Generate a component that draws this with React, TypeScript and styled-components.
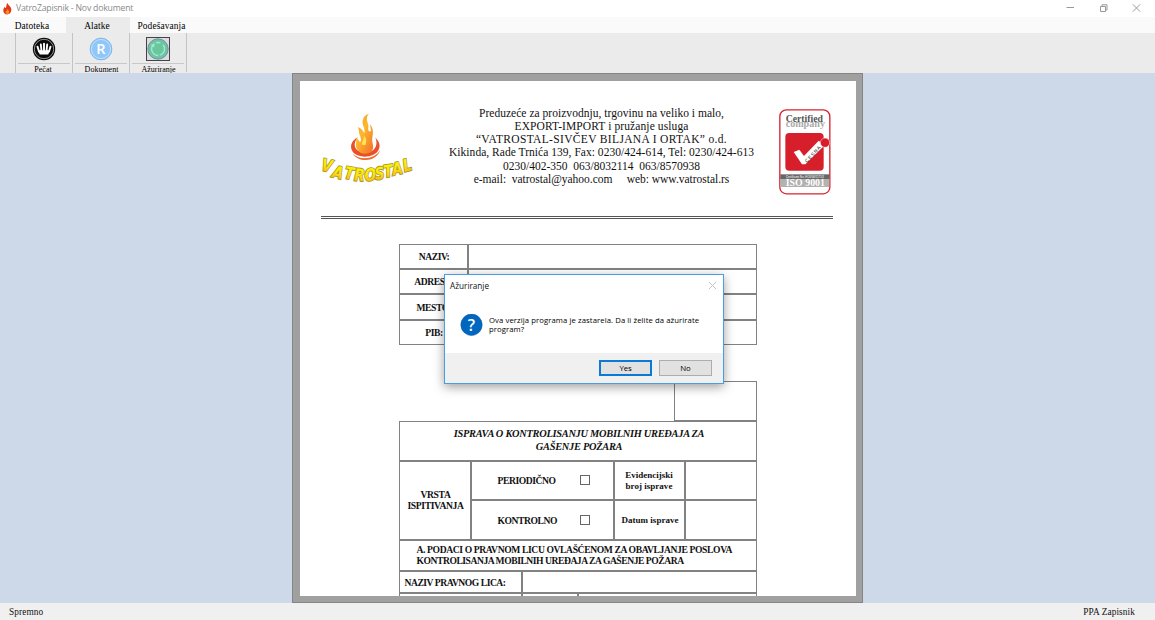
import React from 'react';
import styled, { createGlobalStyle, css } from 'styled-components';

const serif = '"Liberation Serif", "Times New Roman", serif';
const sans = '"Open Sans", "Noto Sans", sans-serif';

const GlobalStyle = createGlobalStyle`
  * { box-sizing: border-box; }
  body { margin: 0; background: #cdd8e8; overflow: hidden; }
`;

const Window = styled.div`
  position: relative;
  display: flex;
  flex-direction: column;
  width: 1155px;
  height: 620px;
  overflow: hidden;
  font-family: ${serif};
  color: #111;
`;

const TitleBar = styled.header`
  display: flex;
  align-items: center;
  height: 17px;
  padding: 0 14px 0 2px;
  background: #fff;
`;

const Title = styled.h1`
  flex: 1;
  margin: 0 0 0 3px;
  font: 400 8.7px/17px ${sans};
  letter-spacing: -0.2px;
  color: #8a8a8a;
`;

const Controls = styled.div`
  display: flex;
  align-items: center;
  gap: 24px;
  height: 15px;
`;

const Tabs = styled.nav`
  display: flex;
  height: 16px;
  background: #fafafa;
`;

const Tab = styled.button<{ $width: number; $active?: boolean }>`
  width: ${p => p.$width}px;
  padding: 2px 2px 0 0;
  border: 0;
  background: ${p => (p.$active ? '#ebebeb' : 'transparent')};
  font: 400 9.4px/14px ${serif};
  letter-spacing: 0.1px;
  color: #000;
`;

const Ribbon = styled.div`
  display: flex;
  height: 40px;
  padding-left: 15px;
  background: #ebebeb;
`;

const Group = styled.div<{ $width: number }>`
  display: flex;
  flex-direction: column;
  align-items: center;
  width: ${p => p.$width}px;
  padding: 4px 2px 0;
  border-left: 1px solid #c4c4c4;
`;

const GroupLabel = styled.span<{ $left?: number; $right?: number }>`
  align-self: stretch;
  height: 10px;
  padding-right: ${p => p.$right ?? 0}px;
  padding-left: ${p => p.$left ?? 0}px;
  border-top: 1px solid #c8c8c8;
  text-align: center;
  font-size: 8px;
  line-height: 12px;
  color: #000;
`;

const RibbonEnd = styled.div`
  width: 1px;
  height: 39px;
  background: #c4c4c4;
`;

const Workspace = styled.main`
  display: flex;
  justify-content: center;
  height: 530px;
  padding-right: 1px;
  background: #cdd8e8;
`;

const Paper = styled.article`
  width: 571px;
  height: 530px;
  border: 8px solid #a0a0a0;
  border-right-width: 7px;
  border-bottom-width: 7px;
  outline: 1px solid #858585;
  outline-offset: -1px;
  background: #fff;
  overflow: hidden;
`;

const Letterhead = styled.div`
  display: grid;
  grid-template-columns: 120px 1fr 52px;
  width: 521px;
  height: 135px;
  margin-left: 10px;
  padding-top: 14px;
`;

const Company = styled.div`
  padding-top: 11.5px;
  margin: 0 5px 0 0;
  text-align: center;
  font-size: 11.5px;
  line-height: 13.3px;
`;

const Line = styled.div<{ $spacing?: number }>`
  white-space: pre;
  letter-spacing: ${p => p.$spacing ?? 0}px;
`;

const Rule = styled.hr`
  width: 512px;
  height: 3px;
  margin: 0 0 0 21px;
  border: solid #555;
  border-width: 1px 0;
`;

const Form = styled.div`
  width: 358px;
  margin: 25px 0 0 99px;
`;

const Table = styled.div<{ $columns: string; $rows: string }>`
  display: grid;
  grid-template-columns: ${p => p.$columns};
  grid-template-rows: ${p => p.$rows};
`;

const Cell = styled.div<{ $rowSpan?: number; $align?: string; $pad?: string; $size?: number; $spacing?: number }>`
  display: flex;
  align-items: center;
  justify-content: ${p => p.$align ?? 'center'};
  padding: ${p => p.$pad ?? '0 0 0 2px'};
  border: 1px solid #828282;
  font-size: ${p => p.$size ?? 9.6}px;
  letter-spacing: ${p => p.$spacing ?? -0.42}px;
  line-height: 11px;
  font-weight: 700;
  white-space: pre;
  ${p => p.$rowSpan && css`grid-row: span ${p.$rowSpan};`}
`;

const Heading = styled(Cell)`
  font-style: italic;
  text-align: center;
  line-height: 12.5px;
`;

const Centered = styled.span`
  text-align: center;
`;

const Stretch = styled.span<{ $spacing: number }>`
  letter-spacing: ${p => p.$spacing}px;
`;

const StampBox = styled.div`
  width: 83px;
  height: 40px;
  margin: 36px 0 0 275px;
  border: 1px solid #828282;
`;

const Choice = styled.span`
  width: 82px;
`;

const CheckBox = styled.span`
  width: 10px;
  height: 10px;
  border: 1px solid #666;
`;

const StatusBar = styled.footer`
  display: flex;
  justify-content: space-between;
  height: 17px;
  padding: 1px 20px 0 9px;
  background: #f0f0f0;
  font-size: 9.3px;
  letter-spacing: 0.1px;
  line-height: 16px;
`;

const Dialog = styled.section`
  position: absolute;
  left: 444px;
  top: 274px;
  display: flex;
  flex-direction: column;
  width: 280px;
  height: 110px;
  border: 1px solid #4a9de0;
  background: #fff;
  box-shadow: 0 3px 10px rgba(0, 0, 0, 0.38);
  font-family: ${sans};
`;

const DialogTitle = styled.div`
  display: flex;
  justify-content: space-between;
  align-items: center;
  height: 21px;
  padding: 0 6px 0 5px;
  font-size: 8.2px;
  line-height: 20px;
`;

const DialogBody = styled.div`
  display: flex;
  flex: 1;
  padding: 18px 0 0 15px;
`;

const Message = styled.p`
  margin: 2px 0 0 6px;
  font-size: 7.7px;
  letter-spacing: 0.09px;
  line-height: 9.4px;
  color: #000;
`;

const DialogFooter = styled.div`
  display: flex;
  justify-content: flex-end;
  gap: 7px;
  height: 30px;
  padding: 7px 11px 0;
  background: #f0f0f0;
`;

const DialogButton = styled.button<{ $primary?: boolean }>`
  width: 53px;
  height: 16px;
  padding: 0;
  border: ${p => (p.$primary ? '2px solid #0b7ad6' : '1px solid #adadad')};
  background: #e1e1e1;
  font: 400 7.8px/12px ${sans};
  letter-spacing: -0.1px;
  color: #000;
`;

const Flame = () => (
  <svg width="11" height="13" viewBox="0 0 11 13">
    <path d="M5.2 0.8 C6 3.4 9.9 4.8 9.3 8.6 C8.9 11.3 7 12.4 5.4 12.4 C3.2 12.4 1.3 11 1.3 8.5 C1.3 6.8 2.2 5.8 2.8 4.8 C3 5.8 3.4 6 3.8 6 C4.6 4.9 4.3 2.6 5.2 0.8Z" fill="#e03a14" />
    <path d="M5.5 7 C6.2 8.2 7.6 8.8 7.2 10.5 C7 11.6 6.2 12 5.4 12 C4.4 12 3.6 11.4 3.6 10.3 C3.6 9 5.1 8.6 5.5 7Z" fill="#ff8a2c" />
  </svg>
);

const CrownIcon = () => (
  <svg width="26" height="26" viewBox="0 0 26 26">
    <circle cx="13" cy="12" r="11.2" fill="#0a0a0a" />
    <circle cx="13" cy="12" r="9.7" fill="none" stroke="#ccc" strokeWidth="0.7" />
    <path d="M8.8 17.6 L7.2 14 Q9 12.6 11 13.4 Q13 12.4 15 13.4 Q17 12.6 18.8 14 L17.2 17.6Z" fill="#fff" />
    <path d="M8 14.5L6.5 9.6 M10.5 13.8L9.8 7.4 M13 13.5V6.6 M15.5 13.8L16.2 7.4 M18 14.5L19.5 9.6" stroke="#fff" strokeWidth="1.9" strokeLinecap="round" />
  </svg>
);

const DocumentIcon = () => (
  <svg width="26" height="26" viewBox="0 0 26 26">
    <circle cx="13" cy="12" r="10.9" fill="#8fc7fb" stroke="#7eaedb" strokeWidth="0.8" />
    <circle cx="13" cy="12" r="9.6" fill="none" stroke="#d5eaff" strokeWidth="0.7" />
    <text x="13" y="17.3" textAnchor="middle" fontFamily="Open Sans, sans-serif" fontWeight="600" fontSize="14.5" fill="#fff">R</text>
  </svg>
);

const UpdateIcon = () => (
  <svg width="26" height="26" viewBox="0 0 26 26">
    <rect x="1.5" y="0.5" width="23" height="23" fill="#dcdde2" stroke="#444" />
    <circle cx="13" cy="12" r="10.2" fill="#69c7a0" stroke="#7a83a8" strokeWidth="0.9" />
    <path d="M7.6 8.4 A6.5 6.5 0 1 0 18 7.8" fill="none" stroke="#a6e6c9" strokeWidth="1.4" strokeDasharray="14 1.5" />
    <path d="M11 5.8 A6.5 6.5 0 0 1 15.4 5.9" fill="none" stroke="#a6e6c9" strokeWidth="1.4" />
    <path d="M5.6 8 L9.8 6.2 L9.2 10.4Z" fill="#a6e6c9" />
  </svg>
);

const letters: [string, number, number, number][] = [
  ['V', 47, 229, 12], ['A', 80, 250, 14], ['T', 115, 252, 10],
  ['R', 147, 258, 5], ['O', 181, 258, 0], ['S', 210, 253, -5],
  ['T', 237, 246, -9], ['A', 265, 238, -12], ['L', 296, 228, -15],
];

const VatrostalLogo = () => (
  <svg width="120" height="100" viewBox="0 0 360 300">
    <defs>
      <linearGradient id="fire" x1="0" y1="0" x2="0.9" y2="1">
        <stop offset="0" stopColor="#f58a2a" />
        <stop offset="0.45" stopColor="#fdb92c" />
        <stop offset="1" stopColor="#f3742a" />
      </linearGradient>
      <linearGradient id="gold" x1="0" y1="0" x2="0" y2="1">
        <stop offset="0" stopColor="#fff200" />
        <stop offset="0.5" stopColor="#fbe312" />
        <stop offset="1" stopColor="#f5a01e" />
      </linearGradient>
    </defs>
    <path d="M144 127 C112 141 116 184 163 185 C207 185 222 150 196 128 C206 150 194 172 168 172 C136 174 124 150 144 127Z" fill="#ea4f2a" />
    <path d="M128 176 C151 197 192 194 211 166 C198 203 145 203 128 176Z" fill="#ee6b2b" />
    <path d="M148 170 C128 154 145 139 136 130 C146 132 148 138 150 142 C158 134 148 123 147 112 C148 105 146 103 144 96 C156 101 160 109 163 115 C168 101 152 87 160 71 C165 58 173 60 177 55 C163 75 177 83 175 98 C173 106 178 112 183 108 C183 103 181 98 180 88 C190 99 190 112 187 127 C184 145 196 156 184 171 C171 178 158 178 148 170Z" fill="url(#fire)" />
    <path d="M157 150 C152 140 166 134 160 121 C171 130 170 140 166 150Z" fill="#ffe45a" />
    {letters.map(([char, x, y, turn], i) => (
      <g
        key={i}
        transform={`translate(${x} ${y}) rotate(${turn}) scale(0.8 1)`}
        fontFamily="DejaVu Sans, sans-serif"
        fontStyle="italic"
        fontWeight="700"
        fontSize="51"
        textAnchor="middle"
      >
        <text fill="url(#gold)" stroke="#a3941c" strokeWidth="5" paintOrder="stroke">{char}</text>
      </g>
    ))}
  </svg>
);

const CertificateBadge = () => (
  <svg width="52" height="101" viewBox="0 -42 156 303">
    <rect x="2.5" y="2.5" width="150" height="252" rx="20" fill="#fff" stroke="#d8232f" strokeWidth="4" />
    <g fontFamily="Liberation Serif, serif" fontWeight="700">
      <text x="20" y="39" fontSize="29" fill="#555" textLength="112" lengthAdjust="spacingAndGlyphs">Certified</text>
      <text x="20" y="54" fontSize="28" fill="#aaa" textLength="118" lengthAdjust="spacingAndGlyphs">company</text>
    </g>
    <rect x="19" y="72" width="115" height="113" rx="12" fill="#d71f2b" />
    <path d="M44 129 L61 122 L75 141 L119 95 L137 109 L79 166 L69 166Z" fill="#fff" />
    <circle cx="138" cy="101" r="14" fill="#d71f2b" stroke="#fff" strokeWidth="1.5" />
    <text transform="translate(84 162) rotate(-47)" fontFamily="Liberation Sans, sans-serif" fontSize="15" fill="#333" textLength="62">CESNA</text>
    <rect x="4" y="196" width="147" height="14" fill="#666" />
    <text x="20" y="207" fontFamily="Liberation Sans, sans-serif" fontWeight="700" fontSize="9" fill="#ddd" textLength="115">Certificate No. HO/206/1171/2</text>
    <rect x="4" y="210" width="147" height="24" fill="#b2b2b2" />
    <text x="20" y="232" fontFamily="Liberation Serif, serif" fontWeight="700" fontSize="28" fill="#fff" stroke="#a5a5a5" strokeWidth="2" paintOrder="stroke" textLength="118" lengthAdjust="spacingAndGlyphs">ISO 9001</text>
  </svg>
);

const QuestionIcon = () => (
  <svg width="23" height="23" viewBox="0 0 23 23">
    <circle cx="11.5" cy="10.8" r="10.7" fill="#0067c0" stroke="#0a56a0" strokeWidth="0.5" />
    <text x="11.5" y="16.6" textAnchor="middle" fontFamily="Open Sans, sans-serif" fontWeight="600" fontSize="16" fill="#fff">?</text>
  </svg>
);

export default function App() {
  return (
    <Window>
      <GlobalStyle />
      <TitleBar>
        <Flame />
        <Title>VatroZapisnik - Nov dokument</Title>
        <Controls>
          <svg width="9" height="9" viewBox="0 0 9 9"><path d="M0.5 3.5H8" stroke="#999" /></svg>
          <svg width="9" height="9" viewBox="0 0 9 9" fill="none" stroke="#999"><path d="M1.5 2.5H6.5V7.5H1.5Z M3 2V0.8H8V6H7" /></svg>
          <svg width="9" height="9" viewBox="0 0 9 9"><path d="M0.8 0.3L8.2 7.7M8.2 0.3L0.8 7.7" stroke="#999" /></svg>
        </Controls>
      </TitleBar>
      <Tabs>
        <Tab $width={66}>Datoteka</Tab>
        <Tab $width={64} $active>Alatke</Tab>
        <Tab $width={65}>Podešavanja</Tab>
      </Tabs>
      <Ribbon>
        <Group $width={57}><CrownIcon /><GroupLabel $right={2}>Pečat</GroupLabel></Group>
        <Group $width={57}><DocumentIcon /><GroupLabel $left={1}>Dokument</GroupLabel></Group>
        <Group $width={57}><UpdateIcon /><GroupLabel $left={1}>Ažuriranje</GroupLabel></Group>
        <RibbonEnd />
      </Ribbon>
      <Workspace>
        <Paper>
          <Letterhead>
            <VatrostalLogo />
            <Company>
              <Line $spacing={0.03}>Preduzeće za proizvodnju, trgovinu na veliko i malo,</Line>
              <Line $spacing={0.1}>EXPORT-IMPORT i pružanje usluga</Line>
              <Line $spacing={0.34}>“VATROSTAL-SIVČEV BILJANA I ORTAK” o.d.</Line>
              <Line $spacing={0.03}>Kikinda, Rade Trnića 139, Fax: 0230/424-614, Tel: 0230/424-613</Line>
              <Line>0230/402-350  063/8032114  063/8570938</Line>
              <Line $spacing={-0.02}>e-mail:  vatrostal@yahoo.com     web: www.vatrostal.rs</Line>
            </Company>
            <CertificateBadge />
          </Letterhead>
          <Rule />
          <Form>
            <Table $columns="69px 289px" $rows="25px 25px 26px 25px">
              <Cell>NAZIV:</Cell><Cell />
              <Cell>ADRESA:</Cell><Cell />
              <Cell>MESTO:</Cell><Cell />
              <Cell>PIB:</Cell><Cell />
            </Table>
            <StampBox />
            <Table $columns="358px" $rows="40px">
              <Heading $size={10.4} $spacing={-0.28} $pad="0 0 1px 3px">{'ISPRAVA O KONTROLISANJU MOBILNIH UREĐAJA ZA\nGAŠENJE POŽARA'}</Heading>
            </Table>
            <Table $columns="72px 143px 71px 72px" $rows="39px 40px">
              <Cell $rowSpan={2} $spacing={-0.36} $pad="0 0 2px 2px"><Centered>{'VRSTA\nISPITIVANJA'}</Centered></Cell>
              <Cell $align="flex-start" $pad="0 0 1px 26px"><Choice>PERIODIČNO</Choice><CheckBox /></Cell>
              <Cell $size={9} $spacing={0.02} $pad="0"><Centered>{'Evidencijski\nbroj isprave'}</Centered></Cell>
              <Cell />
              <Cell $align="flex-start" $pad="0 0 0 26px"><Choice>KONTROLNO</Choice><CheckBox /></Cell>
              <Cell $size={9} $spacing={0.02}>Datum isprave</Cell>
              <Cell />
            </Table>
            <Table $columns="358px" $rows="31px">
              <Cell $align="flex-start" $pad="0 0 2px 17px">
                <span>
                  <Stretch $spacing={-0.38}>A. PODACI O PRAVNOM LICU OVLAŠĆENOM ZA OBAVLJANJE POSLOVA</Stretch>
                  <br />
                  <Stretch $spacing={-0.46}>KONTROLISANJA MOBILNIH UREĐAJA ZA GAŠENJE POŽARA</Stretch>
                </span>
              </Cell>
            </Table>
            <Table $columns="123px 235px" $rows="22px">
              <Cell $align="flex-start" $pad="0 0 0 5px" $spacing={-0.47}>NAZIV PRAVNOG LICA:</Cell><Cell />
            </Table>
            <Table $columns="123px 56px 179px" $rows="20px"><Cell /><Cell /><Cell /></Table>
          </Form>
        </Paper>
      </Workspace>
      <StatusBar><span>Spremno</span><span>PPA Zapisnik</span></StatusBar>
      <Dialog>
        <DialogTitle>
          <span>Ažuriranje</span>
          <svg width="9" height="9" viewBox="0 0 9 9"><path d="M0.8 0.8L8.2 8.2M8.2 0.8L0.8 8.2" stroke="#c4c4c4" /></svg>
        </DialogTitle>
        <DialogBody>
          <QuestionIcon />
          <Message>Ova verzija programa je zastarela. Da li želite da ažurirate<br />program?</Message>
        </DialogBody>
        <DialogFooter>
          <DialogButton $primary>Yes</DialogButton>
          <DialogButton>No</DialogButton>
        </DialogFooter>
      </Dialog>
    </Window>
  );
}
